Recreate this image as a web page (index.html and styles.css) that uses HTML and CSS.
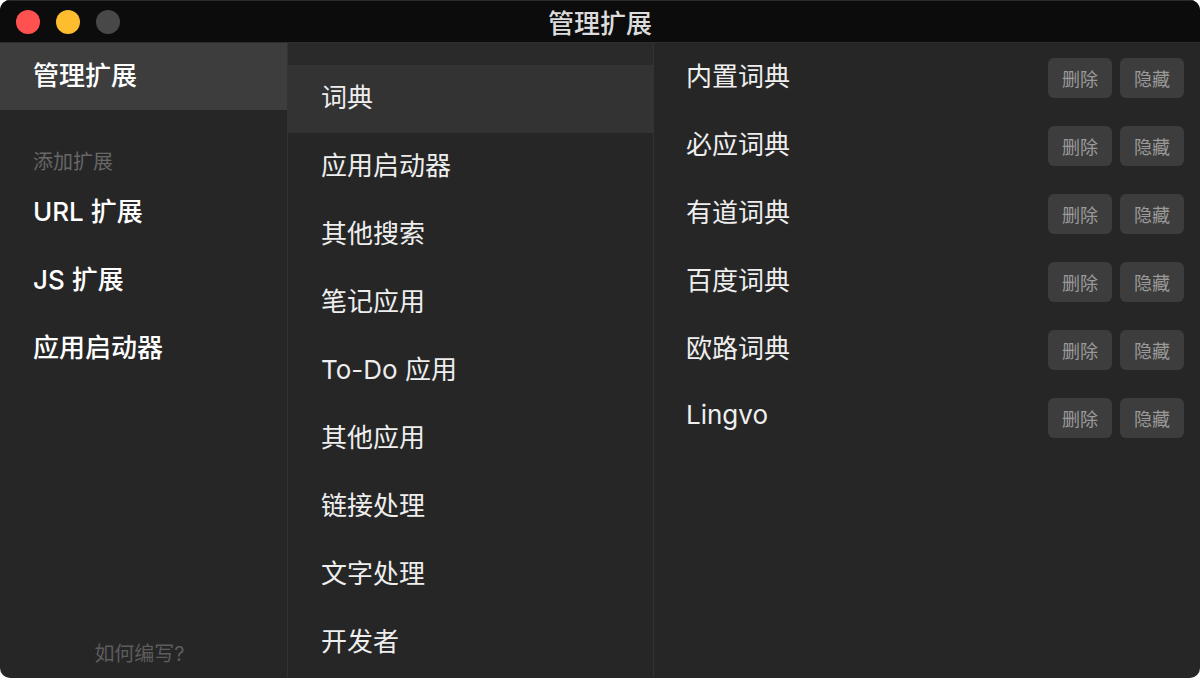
FILE: index.html
```html
<!DOCTYPE html>
<html lang="zh-CN">
<head>
    <meta charset="UTF-8">
    <meta name="viewport" content="width=device-width, initial-scale=1.0">
    <title>管理扩展</title>
    <link rel="stylesheet" href="styles.css">
</head>
<body>

<div class="window">
    <div class="titlebar">
        <div class="lights">
            <span class="light red"></span>
            <span class="light yellow"></span>
            <span class="light gray"></span>
        </div>
        <div class="title">管理扩展</div>
    </div>

    <div class="main">
        <!-- left sidebar -->
        <div class="sidebar">
            <div class="side-item active">管理扩展</div>
            <div class="side-label">添加扩展</div>
            <div class="side-item">URL 扩展</div>
            <div class="side-item">JS 扩展</div>
            <div class="side-item">应用启动器</div>
            <div class="side-help">如何编写?</div>
        </div>

        <!-- categories -->
        <div class="categories">
            <div class="cat-item active">词典</div>
            <div class="cat-item">应用启动器</div>
            <div class="cat-item">其他搜索</div>
            <div class="cat-item">笔记应用</div>
            <div class="cat-item">To-Do 应用</div>
            <div class="cat-item">其他应用</div>
            <div class="cat-item">链接处理</div>
            <div class="cat-item">文字处理</div>
            <div class="cat-item">开发者</div>
        </div>

        <!-- extensions in category -->
        <div class="extensions">
            <div class="ext-row">
                <span class="ext-name">内置词典</span>
                <button class="ext-btn">删除</button>
                <button class="ext-btn">隐藏</button>
            </div>
            <div class="ext-row">
                <span class="ext-name">必应词典</span>
                <button class="ext-btn">删除</button>
                <button class="ext-btn">隐藏</button>
            </div>
            <div class="ext-row">
                <span class="ext-name">有道词典</span>
                <button class="ext-btn">删除</button>
                <button class="ext-btn">隐藏</button>
            </div>
            <div class="ext-row">
                <span class="ext-name">百度词典</span>
                <button class="ext-btn">删除</button>
                <button class="ext-btn">隐藏</button>
            </div>
            <div class="ext-row">
                <span class="ext-name">欧路词典</span>
                <button class="ext-btn">删除</button>
                <button class="ext-btn">隐藏</button>
            </div>
            <div class="ext-row">
                <span class="ext-name">Lingvo</span>
                <button class="ext-btn">删除</button>
                <button class="ext-btn">隐藏</button>
            </div>
        </div>
    </div>
</div>

</body>
</html>
```

FILE: styles.css
```css
html, body {
    margin: 0;
    padding: 0;
    height: 100%;
}

body {
    background-color: #fff;
    font-family: "Inter", "Noto Sans CJK SC", sans-serif;
    color: #eee;
}

.window {
    height: 678px;
    width: 1200px;
    box-sizing: border-box;
    border-radius: 10px;
    overflow: hidden;
    background-color: #262626;
    display: flex;
    flex-direction: column;
}

.titlebar {
    flex-shrink: 0;
    background-color: #0c0c0c;
    border-top: 1px solid #2c2c2c;
    border-bottom: 1px solid #2e2e2e;
    box-sizing: border-box;
    height: 43px;
    position: relative;
    display: flex;
    align-items: center;
    justify-content: center;
}

.lights {
    position: absolute;
    left: 16px;
    top: 9px;
    display: flex;
    gap: 16px;
}

.light {
    width: 24px;
    height: 24px;
    border-radius: 50%;
}

.red { background-color: #ff5250; }
.yellow { background-color: #fdbd2e; }
.gray { background-color: #484848; }

.title {
    font-family: "Noto Sans CJK SC", sans-serif;
    font-size: 26px;
    font-weight: 500;
    color: #dcdcdc;
    margin-top: -1px;
}

.main {
    flex: 1;
    display: flex;
    min-height: 0;
}

.sidebar {
    width: 287px;
    border-right: 1px solid #333;
    display: flex;
    flex-direction: column;
}

.side-item {
    height: 68px;
    line-height: 68px;
    padding-left: 33px;
    font-size: 26px;
    font-weight: 500;
    color: #fff;
}

.side-item.active {
    background-color: #3d3d3d;
    height: 67px;
    line-height: 66px;
}

.side-label {
    margin-top: 38px;
    margin-bottom: 2px;
    padding-left: 33px;
    font-size: 20px;
    color: #676767;
    line-height: 28px;
}

.side-help {
    margin-top: auto;
    margin-bottom: 10px;
    padding-right: 8px;
    text-align: center;
    font-size: 20px;
    color: #5c5c5c;
    line-height: 28px;
}

.categories {
    width: 365px;
    border-right: 1px solid #333;
    padding-top: 22px;
    background: linear-gradient(#2a2a2a 22px, #262626 22px);
}

.cat-item {
    height: 68px;
    line-height: 66px;
    padding-left: 33px;
    font-size: 26px;
    color: #eee;
}

.cat-item.active {
    background-color: #333;
}

.extensions {
    flex: 1;
    margin-top: -1px;
    padding: 0 16px 0 32px;
}

.ext-row {
    height: 68px;
    display: flex;
    align-items: center;
    gap: 8px;
}

.ext-name {
    flex: 1;
    font-size: 26px;
    color: #eee;
    padding-bottom: 3px;
}

.ext-btn {
    width: 64px;
    height: 40px;
    border: none;
    border-radius: 6px;
    background-color: #3d3d3d;
    color: #9a9a9a;
    font-family: "Noto Sans CJK SC", sans-serif;
    font-size: 18px;
    padding: 0;
    margin-top: 4px;
}
```
